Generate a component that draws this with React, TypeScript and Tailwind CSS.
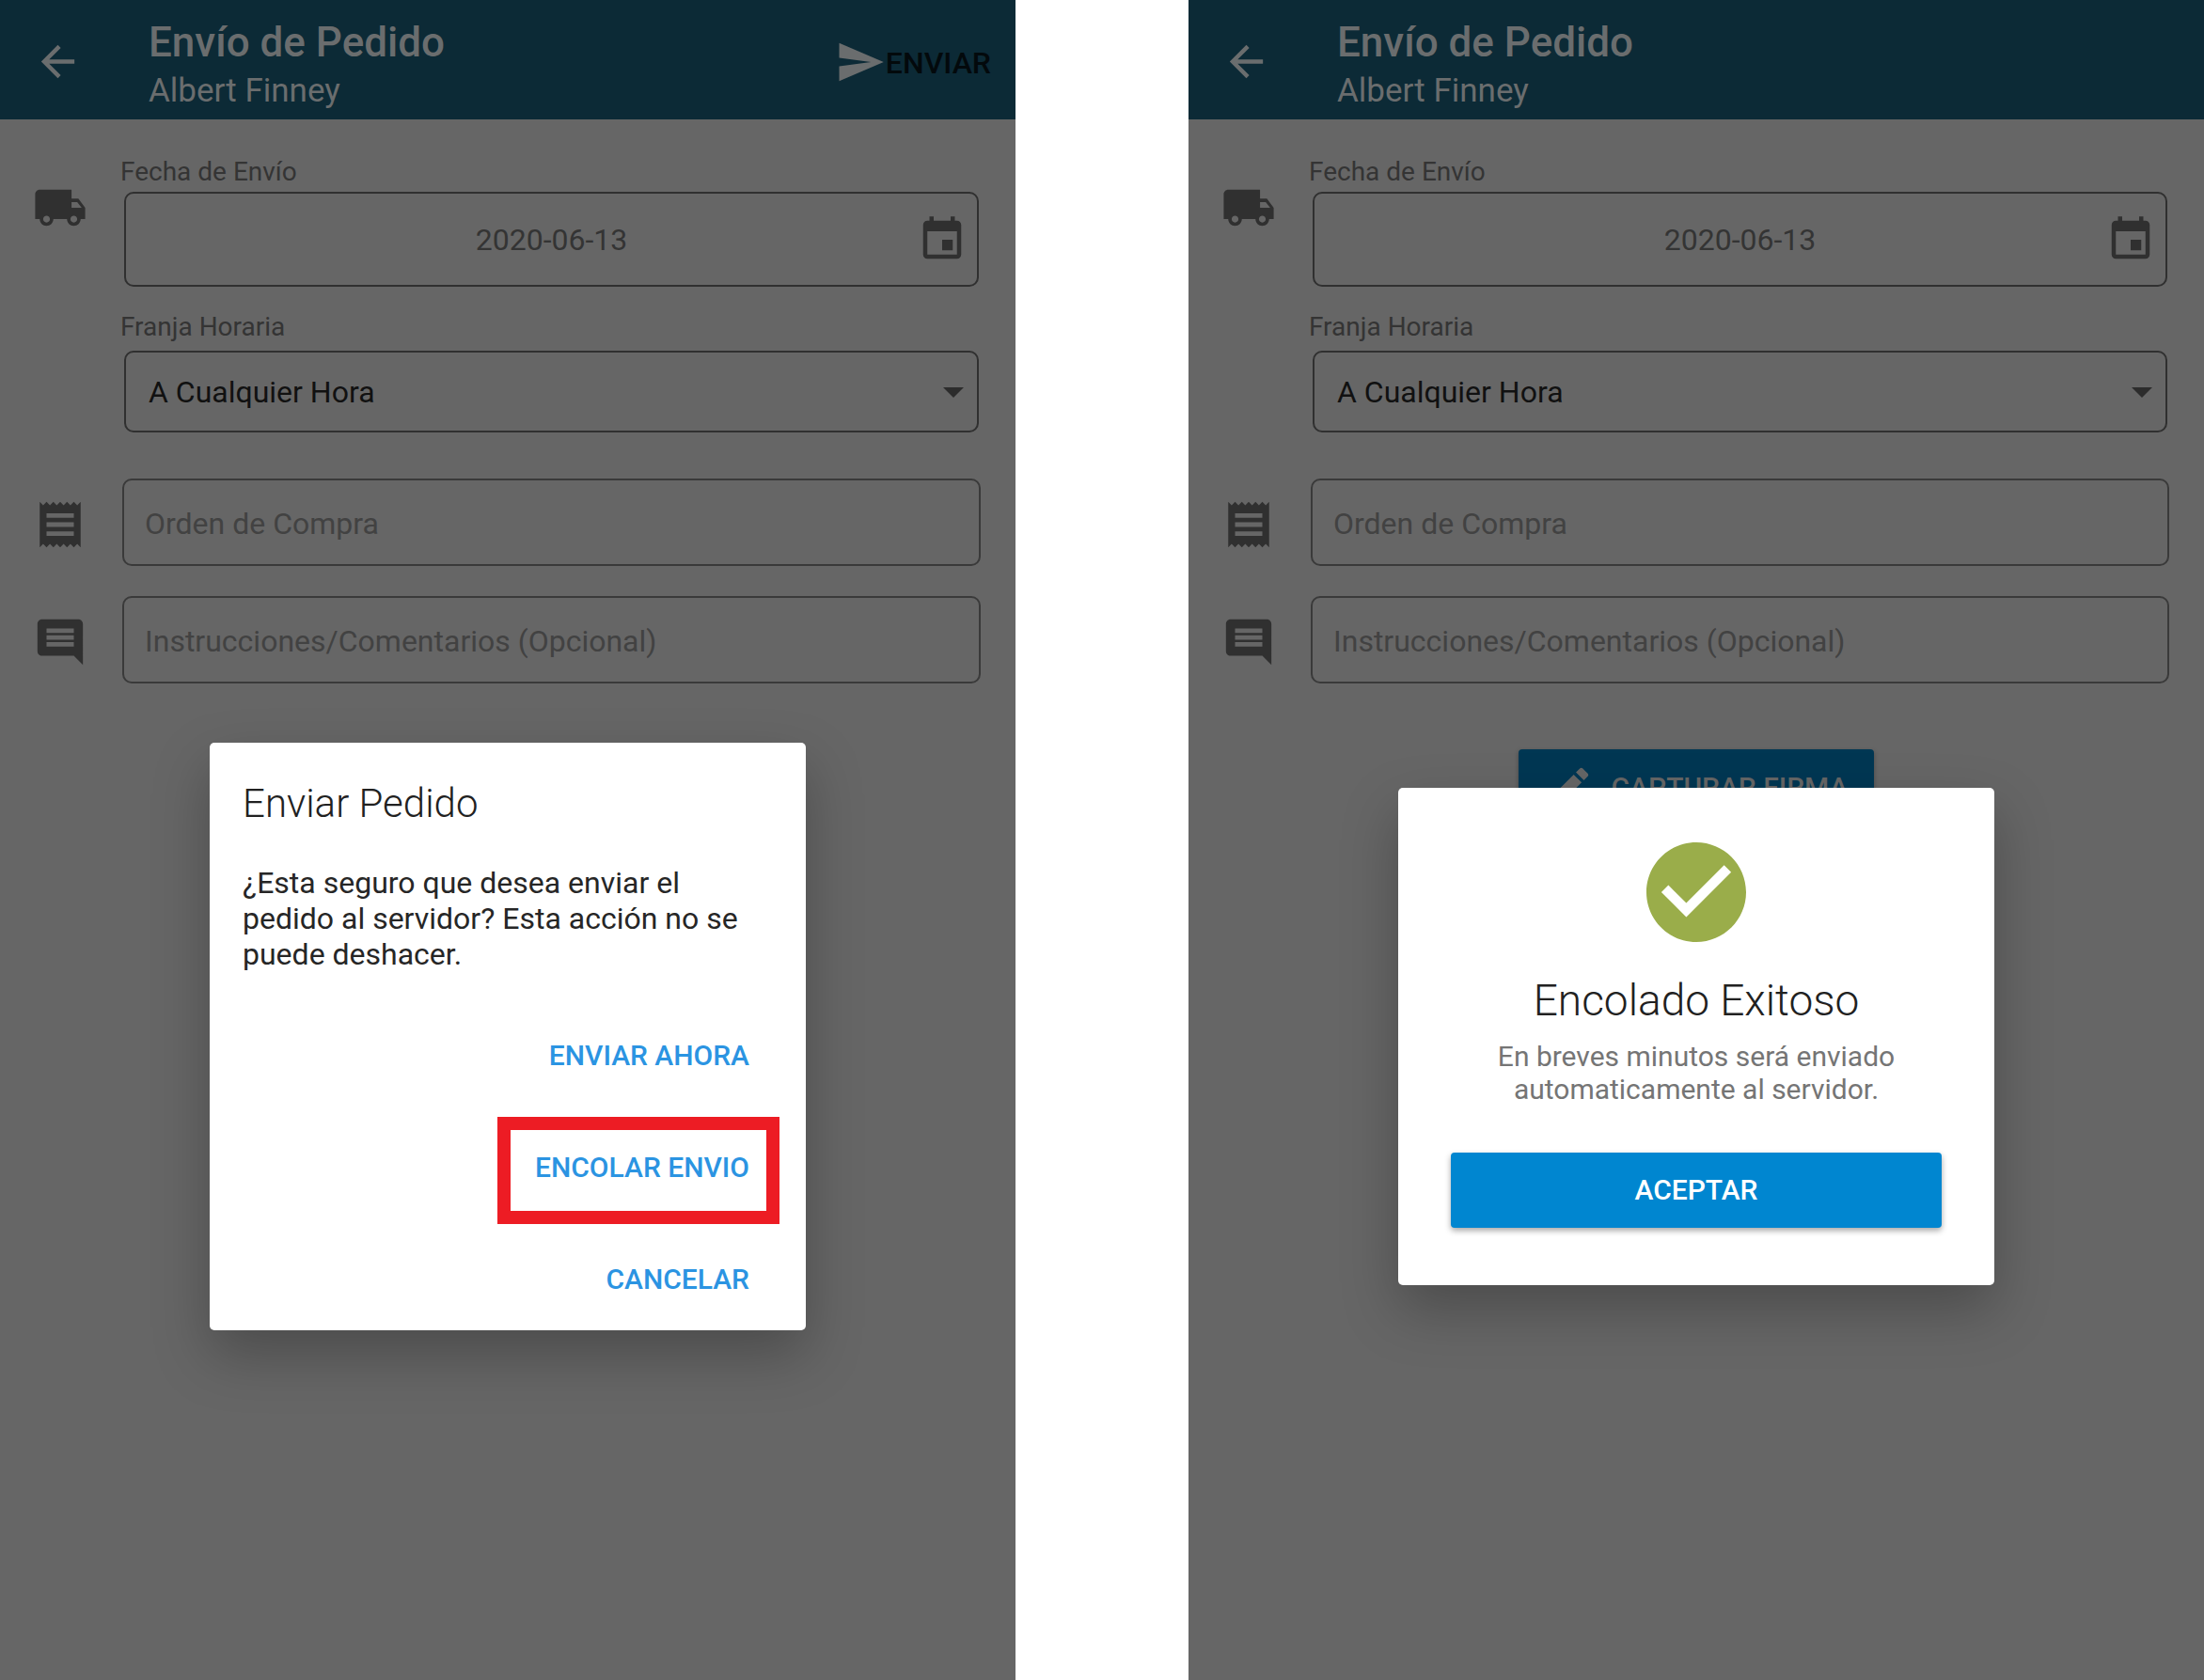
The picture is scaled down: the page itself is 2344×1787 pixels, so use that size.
import { useId, type ReactNode } from "react";

function Icon({ path, className, viewBox = "0 0 24 24" }: { path: string; className: string; viewBox?: string }) {
  return (
    <svg viewBox={viewBox} className={className} fill="currentColor" aria-hidden="true">
      <path d={path} />
    </svg>
  );
}

const paths = {
  back: "M20 11H7.83l5.59-5.59L12 4l-8 8 8 8 1.41-1.41L7.83 13H20v-2z",
  send: "M2.01 21L23 12 2.01 3 2 10l15 2-15 2z",
  truck:
    "M20 8h-3V4H3c-1.1 0-2 .9-2 2v11h2c0 1.66 1.34 3 3 3s3-1.34 3-3h6c0 1.66 1.34 3 3 3s3-1.34 3-3h2v-5l-3-4zM6 18.500c-.83 0-1.500-.67-1.500-1.500s.67-1.500 1.500-1.500 1.500.67 1.500 1.500-.67 1.500-1.500 1.500zm13.500-9l1.960 2.500H17V9.500h2.500zm-1.500 9c-.83 0-1.500-.67-1.500-1.500s.67-1.500 1.500-1.500 1.500.67 1.500 1.500-.67 1.500-1.500 1.500z",
  event:
    "M17 12h-5v5h5v-5zM16 1v2H8V1H6v2H5c-1.110 0-1.990.9-1.990 2L3 19c0 1.100.89 2 2 2h14c1.100 0 2-.9 2-2V5c0-1.100-.9-2-2-2h-1V1h-2zm3 18H5V8h14v11z",
  receipt:
    "M18 17H6v-2h12v2zm0-4H6v-2h12v2zm0-4H6V7h12v2zM3 22l1.500-1.500L6 22l1.500-1.500L9 22l1.500-1.500L12 22l1.500-1.500L15 22l1.500-1.500L18 22l1.500-1.500L21 22V2l-1.500 1.500L18 2l-1.500 1.500L15 2l-1.500 1.500L12 2l-1.500 1.500L9 2 7.500 3.500 6 2 4.500 3.500 3 2v20z",
  comment:
    "M21.990 4c0-1.100-.89-2-1.990-2H4c-1.100 0-2 .9-2 2v12c0 1.100.9 2 2 2h14l4 4-.01-18zM18 14H6v-2h12v2zm0-3H6V9h12v2zm0-3H6V6h12v2z",
  pencil:
    "M3 17.250V21h3.750L17.810 9.940l-3.750-3.750L3 17.250zM20.710 7.040c.39-.39.39-1.020 0-1.410l-2.340-2.340c-.39-.39-1.020-.39-1.410 0l-1.830 1.830 3.750 3.750 1.830-1.830z",
  check:
    "M12 2C6.480 2 2 6.480 2 12s4.480 10 10 10 10-4.480 10-10S17.520 2 12 2zm-2 15l-5-5 1.410-1.410L10 14.170l7.590-7.590L19 8l-9 9z",
  caret: "M0 0h22L11 11z",
};

function FormRow({ icon, children, iconClass }: { icon: string; children: ReactNode; iconClass: string }) {
  return (
    <div className="flex">
      <div className="w-[130px] shrink-0 pl-[35px]">
        <Icon path={icon} className={iconClass} />
      </div>
      <div className="min-w-0 flex-1">{children}</div>
    </div>
  );
}

const labelClass = "-ml-[2px] block pt-px text-[28px] leading-[35px] text-[#343434]";
const inputClass =
  "block h-[93px] w-full rounded-[10px] border-2 border-[#3a3a3a] bg-transparent px-[22px] pt-[2px] text-[32px] text-[#111] placeholder:text-[#424242] outline-none";
const dialogShadow = "shadow-[0_26px_60px_rgba(0,0,0,0.26)]";

function Screen({
  sendAction = false,
  signature = false,
  children,
}: {
  sendAction?: boolean;
  signature?: boolean;
  children: ReactNode;
}) {
  const id = useId();
  return (
    <section className="relative min-h-screen min-w-0 flex-1 bg-[#666]">
      <header className="flex h-[127px] items-center bg-[#0c2a36] pt-1 pr-[26px] pl-[35px] text-[#6a6d6e]">
        <button type="button" aria-label="Volver">
          <Icon path={paths.back} className="size-[53px]" />
        </button>
        <div className="ml-[70px] flex-1 pt-[10px]">
          <h1 className="text-[44px] leading-[52px] font-medium">Envío de Pedido</h1>
          <p className="text-[35px] leading-[52px]">Albert Finney</p>
        </div>
        {sendAction && (
          <button type="button" className="flex items-center text-[32px] font-medium">
            <Icon path={paths.send} className="size-[54px]" />
            <span className="pt-[2px] text-[#03090c]">ENVIAR</span>
          </button>
        )}
      </header>

      <form className="pt-[37px] pr-[37px]">
        <FormRow icon={paths.truck} iconClass="mt-7 size-[58px] text-[#303030]">
          <label htmlFor={id + "date"} className={labelClass}>
            Fecha de Envío
          </label>
          <div className="relative mt-1 mr-[2px] ml-[2px]">
            <input
              id={id + "date"}
              type="text"
              readOnly
              defaultValue="2020-06-13"
              className="block h-[101px] w-full rounded-[10px] border-2 border-[#303030] bg-transparent text-center text-[32px] text-[#343434] outline-none"
            />
            <button type="button" aria-label="Elegir fecha" className="absolute top-6 right-3 text-[#303030]">
              <Icon path={paths.event} className="size-[54px]" />
            </button>
          </div>
          <label htmlFor={id + "slot"} className={labelClass + " mt-6"}>
            Franja Horaria
          </label>
          <div className="relative mt-2 mr-[2px] ml-[2px]">
            <select
              id={id + "slot"}
              className="block h-[87px] w-full appearance-none rounded-[10px] border-2 border-[#303030] bg-transparent px-6 text-[32px] text-[#111] outline-none"
            >
              <option>A Cualquier Hora</option>
            </select>
            <Icon
              path={paths.caret}
              viewBox="0 0 22 11"
              className="pointer-events-none absolute top-[39px] right-4 h-[11px] w-[22px] text-[#2c2c2c]"
            />
          </div>
        </FormRow>
        <div className="mt-[49px] flex flex-col gap-8">
          <FormRow icon={paths.receipt} iconClass="mt-5 size-[58px] text-[#303030]">
            <input type="text" aria-label="Orden de Compra" placeholder="Orden de Compra" className={inputClass} />
          </FormRow>
          <FormRow icon={paths.comment} iconClass="mt-5 size-[58px] text-[#303030]">
            <input
              type="text"
              aria-label="Instrucciones/Comentarios (Opcional)"
              placeholder="Instrucciones/Comentarios (Opcional)"
              className={inputClass}
            />
          </FormRow>
        </div>
        {signature && (
          <div className="mt-[70px] -mr-[37px] flex justify-center">
            <button
              type="button"
              className="flex h-20 items-center gap-[18px] rounded-sm bg-[#003753] pr-7 pl-[27px] text-[30px] font-medium text-[#666] shadow-[0_2px_5px_rgba(0,0,0,0.3)]"
            >
              <Icon path={paths.pencil} className="size-[54px]" />
              CAPTURAR FIRMA
            </button>
          </div>
        )}
      </form>

      <div className="absolute inset-0 flex items-center justify-center pt-[417px]">{children}</div>
    </section>
  );
}

const actionClass = "h-20 pr-8 text-[30px] font-medium text-[#2b94e2]";

export default function App() {
  return (
    <main className="flex min-h-screen gap-[184px] bg-white font-[Roboto,sans-serif]">
      <Screen sendAction>
        <div role="dialog" aria-label="Enviar Pedido" className={"w-[634px] rounded-[5px] bg-white pt-10 pb-[14px] " + dialogShadow}>
          <h2 className="px-[35px] text-[42px] leading-[50px] font-light text-[#212121]">Enviar Pedido</h2>
          <p className="mt-10 px-[35px] text-[32px] leading-[38px] text-[#262626]">
            ¿Esta seguro que desea enviar el pedido al servidor? Esta acción no se puede deshacer.
          </p>
          <div className="mt-[49px] flex flex-col items-end pr-7">
            <button type="button" className={actionClass}>
              ENVIAR AHORA
            </button>
            <button
              type="button"
              className="mt-[25px] mb-[19px] h-[114px] border-[14px] border-[#ed1c24] pr-[18px] pb-[6px] pl-[26px] text-[30px] font-medium text-[#2b94e2]"
            >
              ENCOLAR ENVIO
            </button>
            <button type="button" className={actionClass}>
              CANCELAR
            </button>
          </div>
        </div>
      </Screen>

      <Screen signature>
        <div
          role="dialog"
          aria-label="Encolado Exitoso"
          className={"flex w-[634px] flex-col items-center rounded-[5px] bg-white px-14 pt-[58px] pb-[61px] text-center " + dialogShadow}
        >
          <Icon path={paths.check} viewBox="2 2 20 20" className="size-[106px] text-[#9aad4a]" />
          <h2 className="mt-[34px] text-[46px] leading-[56px] font-light text-[#212121]">Encolado Exitoso</h2>
          <p className="mt-[14px] px-8 text-[30px] leading-[35px] text-[#757575]">
            En breves minutos será enviado automaticamente al servidor.
          </p>
          <button
            type="button"
            className="mt-[50px] h-20 w-full rounded-sm bg-[#0086d0] text-[30px] font-medium text-white shadow-[0_3px_6px_rgba(0,0,0,0.35)]"
          >
            ACEPTAR
          </button>
        </div>
      </Screen>
    </main>
  );
}
